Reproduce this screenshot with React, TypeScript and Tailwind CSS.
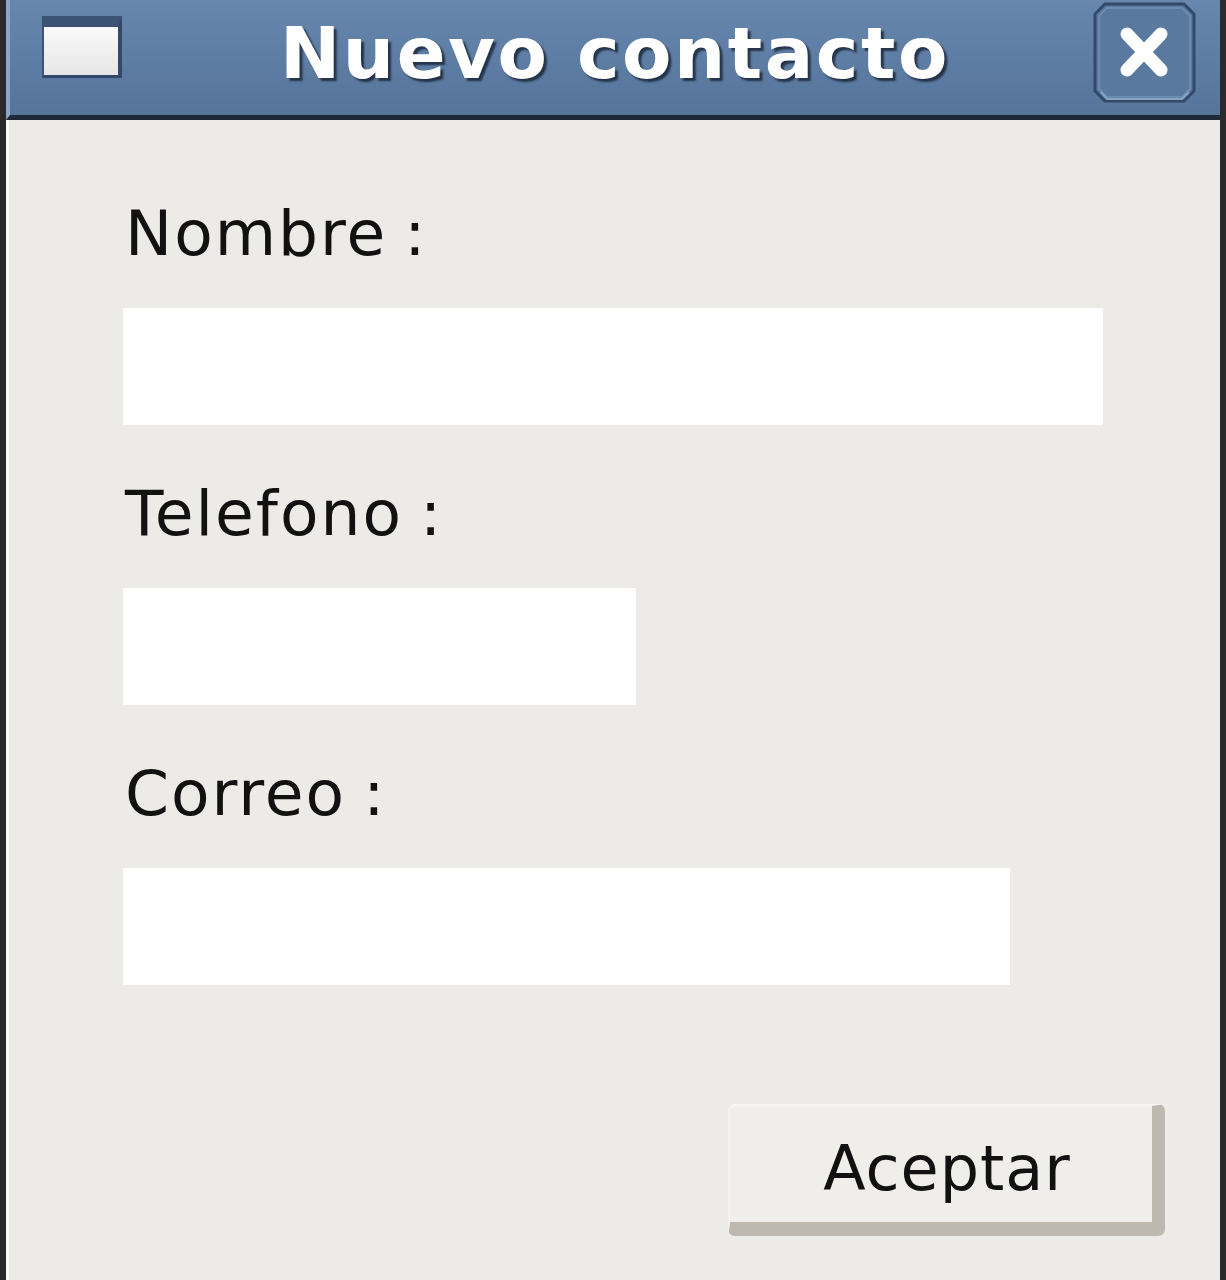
import React from 'react';

const fields = [
  { label: 'Nombre', width: 'w-[980px]' },
  { label: 'Telefono', width: 'w-[513px]' },
  { label: 'Correo', width: 'w-[887px]' },
];

function CloseButton() {
  return (
    <button className="w-[103px] h-[101px] mt-[2px] mr-[24px]" aria-label="Cerrar">
      <svg viewBox="0 0 103 101" width="103" height="101">
        <path
          d="M12 2 H91 L101 12 V89 L91 99 H12 L2 89 V12 Z"
          fill="#5a799e"
          stroke="#34496a"
          strokeWidth="3"
        />
        <path d="M14 6 H89 L97 14 V87 L89 95 H14 L6 87 V14 Z" fill="none" stroke="#7391b6" strokeWidth="1.5" />
        <path d="M8 90 L14 97 H89 L96 90" fill="none" stroke="#86a2c4" strokeWidth="2" />
        <path d="M34 32 L68 68 M68 32 L34 68" stroke="#ffffff" strokeWidth="13" strokeLinecap="round" />
      </svg>
    </button>
  );
}

export default function App() {
  return (
    <div
      className="w-[1226px] h-[1280px] flex flex-col bg-[#edebe7] border-x-[6px] border-[#2a2a2a] overflow-hidden"
      style={{ fontFamily: '"DejaVu Sans", Verdana, sans-serif' }}
    >
      {/* title bar */}
      <div className="h-[120px] shrink-0 grid grid-cols-[1fr_auto_1fr] items-start bg-gradient-to-b from-[#6787ae] to-[#56749a] border-b-[5px] border-[#1f2a38] border-l-4 border-l-[#88a6cc]">
        <div className="pt-[16px] pl-[32px]">
          <div className="w-[80px] h-[62px] bg-gradient-to-b from-[#fafafa] to-[#e6e6e6] border-t-[11px] border-t-[#3c5375] border-r-4 border-r-[#34496a] border-b-[3px] border-b-[#34496a] border-l-2 border-l-[#3c5375]" />
        </div>
        <h1
          className="pt-[17px] text-[72px] leading-none font-bold text-white tracking-[2.5px]"
          style={{ textShadow: '3px 3px 2px rgba(18,28,45,0.75)' }}
        >
          Nuevo contacto
        </h1>
        <div className="flex justify-end">
          <CloseButton />
        </div>
      </div>

      {/* form */}
      <div className="flex-1 flex flex-col pl-[114px] pr-[55px] pt-[82px] border-l-[3px] border-[#fafaf6]">
        {fields.map((f, i) => (
          <div key={f.label} className={i > 0 ? 'mt-[57px]' : ''}>
            <label className="block text-[63px] leading-none h-[64px] text-[#111] tracking-[2px] [word-spacing:-5px] pl-[2px]">
              {f.label} :
            </label>
            <div className={`${f.width} h-[117px] mt-[42px] bg-white`} />
          </div>
        ))}

        <button className="self-end mt-[119px] w-[437px] h-[132px] flex items-center justify-center rounded-[7px] bg-[#efeeea] border-t-2 border-l-2 border-t-[#f7f6f3] border-l-[#f4f3ef] border-r-[13px] border-b-[14px] border-r-[#bdb8b0] border-b-[#bdb8b0] text-[62px] leading-none text-[#111] tracking-[1px] pt-[10px] pl-[12px]">
          Aceptar
        </button>
      </div>
    </div>
  );
}
